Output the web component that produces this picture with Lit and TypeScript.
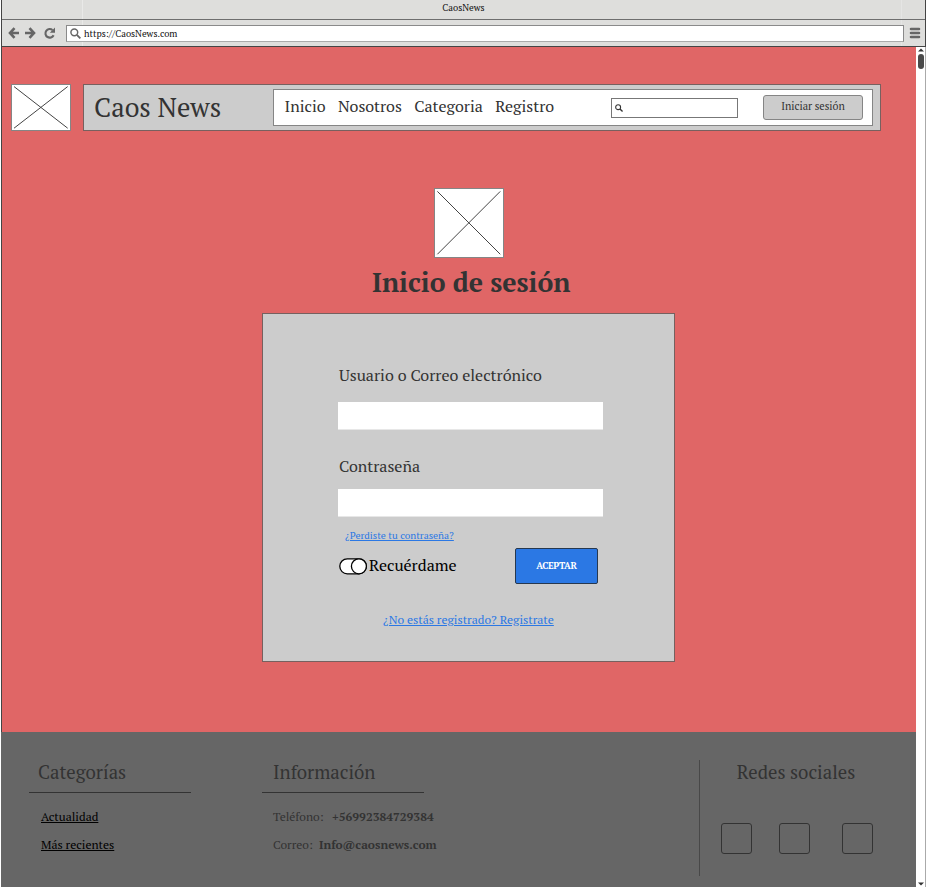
import { LitElement, html, css, svg } from "lit";
import { customElement } from "lit/decorators.js";

@customElement("image-placeholder")
class ImagePlaceholder extends LitElement {
  static styles = css`
    :host { display: block; box-sizing: border-box; background: #fff; border: 1px solid #858585; }
    .cross { display: block; width: 100%; height: 100%; }
  `;
  render() {
    return html`<svg class="cross" viewBox="0 0 100 100" preserveAspectRatio="none">
      <path d="M3.5 3.5L96 96M96 3.5L3.5 96" fill="none" stroke="#444" stroke-width="1" vector-effect="non-scaling-stroke"></path>
    </svg>`;
  }
}

@customElement("app-root")
class AppRoot extends LitElement {
  static styles = css`
    :host { display: block; width: 927px; height: 887px; overflow: hidden; background: #fff;
      font-family: "PT Serif", "Liberation Serif", serif; color: #333; }
    * { box-sizing: border-box; }
    svg { display: block; }
    a { color: inherit; text-decoration: underline; white-space: nowrap; }
    .window { width: 925px; height: 887px; margin-left: 1px; display: flex; flex-direction: column; }
    .chrome { height: 47px; border: solid #444; border-width: 0 1px 1px;
      background: linear-gradient(90deg, transparent 80px, #e9e9e8 80px, #e9e9e8 81px, transparent 81px,
        transparent 899px, #e5e5e4 899px, #e5e5e4 900px, transparent 900px), #dededc; }
    .title { height: 20px; border-bottom: 1px solid #6e6e6e; text-align: center; font-size: 9.33px; line-height: 15px; color: #111; }
    .toolbar { height: 26px; display: flex; align-items: center; padding: 0 5px 0 6px; }
    .icons { flex: none; margin-right: 10px; }
    .address { flex: none; width: 838px; height: 17px; margin-top: 1px; background: #fff; border: 1px solid #8a8a8a; border-bottom-color: #aaa;
      display: flex; align-items: center; padding-left: 3px; font-size: 9.33px; line-height: 15px; color: #111; }
    .address svg { margin-right: 3px; }
    .menu { flex: none; margin-left: 5px; }
    .viewport { flex: 1; display: flex; min-height: 0; }
    .page { width: 915px; background: #e06666; display: flex; flex-direction: column; }
    .main { height: 685px; border-left: 1px solid #444; display: flex; flex-direction: column; align-items: flex-start; }
    .header { display: flex; margin: 37px 0 0 9px; }
    .logo { width: 60px; height: 47px; }
    .bar { width: 798px; height: 47px; margin-left: 12px; padding: 4px 7px 4px 10px; background: #ccc;
      border: 1px solid #77605f; display: flex; justify-content: space-between; }
    .brand { font-size: 26.67px; line-height: 36px; }
    .panel { width: 600px; height: 37px; background: #fff; border: 1px solid #858585; display: flex; align-items: center; padding-left: 10.5px; }
    .nav { display: flex; gap: 12.3px; font-size: 16px; line-height: 32px; margin-top: -4px; width: 326.5px; white-space: nowrap; }
    .search { width: 127px; height: 20px; border: 1px solid #777; display: flex; align-items: center; padding-left: 3px; }
    .login { width: 100px; height: 25px; margin-left: 25px; border: 1px solid #858585; border-radius: 3px; background: #ccc;
      text-align: center; font-size: 10.67px; line-height: 20px; }
    .avatar { width: 70px; height: 70px; margin: 57px 0 0 432px; }
    .heading { margin: 5px 0 0 370px; font-size: 26.67px; line-height: 38px; font-weight: bold; white-space: nowrap; }
    .card { width: 413px; height: 349px; margin: 12px 0 0 260px; padding: 49px 70px 0 75px; background: #ccc; border: 1px solid #76605f; }
    .label { display: block; padding-left: 1px; font-size: 16px; line-height: 24px; white-space: nowrap; }
    .label.second { margin-top: 24px; }
    .field { width: 265px; height: 28px; margin-top: 15px; background: #fff; border-bottom: 1px solid #e7e7e7; }
    .field.second { margin-top: 11px; }
    .lost { display: block; margin: 12px 0 0 7px; font-size: 10px; line-height: 14px; color: #2b78e4; }
    .actions { display: flex; height: 36px; margin-top: 5px; }
    .remember { display: flex; width: 177px; padding-left: 1px; align-items: center; gap: 1px; color: #000; font-size: 16px; }
    .remember span { margin-top: -2px; }
    .accept { width: 83px; height: 36px; background: #2b78e4; border: 1px solid #26384f; border-radius: 2px; color: #fff;
      text-align: center; font-size: 9.33px; line-height: 34px; font-weight: bold; letter-spacing: -0.3px; }
    .register { display: block; margin: 28px 0 0 45px; font-size: 12px; line-height: 16px; color: #2b78e4; }
    .footer { flex: 1; background: #666; display: flex; }
    .group { padding-top: 28px; }
    .categories { margin-left: 28px; width: 162px; }
    .info { margin-left: 71px; width: 200px; }
    .head { font-size: 18.67px; line-height: 25px; padding: 0 0 0 10px; height: 33px; width: 162px; border-bottom: 1px solid #333; white-space: nowrap; }
    .categories .head { padding-left: 9px; }
    .info .head { padding-left: 11px; }
    .row { padding-left: 11px; height: 28px; line-height: 28px; font-size: 12px; white-space: nowrap; display: flex; }
    .rows { padding-top: 10px; }
    .categories .row { padding-left: 12px; color: #000; }
    .term { width: 59px; }
    .term.short { width: 46px; }
    .social { margin: 28px 0 11px 237px; border-left: 1px solid #484848; width: 190px; }
    .socialtitle { text-align: center; font-size: 18.67px; line-height: 25px; padding-left: 3px; }
    .squares { display: flex; gap: 27.4px; margin: 38px 0 0 21px; }
    .square { width: 31px; height: 31px; border: 1.5px solid #333; border-radius: 3px; }
    .square.last { margin-left: 4px; }
    .scroll { width: 10px; background: #fff; border-right: 1px solid #aaa; display: flex; flex-direction: column; align-items: center; }
    .thumb { width: 6px; height: 15px; border-radius: 3px; background: #4a4a4a; margin-top: 1px; }
    .down { margin-top: auto; margin-bottom: 1px; }
  `;

  private magnifier(size: number, color: string) {
    return html`<svg width=${size} height=${size} viewBox="0 0 12 12" fill="none" stroke=${color} stroke-width="1.6">
      ${svg`<circle cx="4.7" cy="4.7" r="3.7"></circle><path d="M7.5 7.5L11.3 11.3" stroke-width="2"></path>`}
    </svg>`;
  }

  render() {
    return html`
      <div class="window">
        <div class="chrome">
          <div class="title">CaosNews</div>
          <div class="toolbar">
            <svg class="icons" width="48" height="14" viewBox="0 0 48 14" fill="none" stroke="#666" stroke-width="2.6">
              <path d="M6.5 2.2L2 7L6.5 11.8M2 7H11"></path>
              <path d="M21.5 2.2L26 7L21.5 11.8M26 7H17"></path>
              <path d="M45.6 9.2A4.3 4.3 0 1 1 44.5 4" stroke-width="2.1"></path>
              <path d="M47 1.5V6.7H41.8Z" fill="#666" stroke="none"></path>
            </svg>
            <div class="address">${this.magnifier(11, "#666")}<span>https://CaosNews.com</span></div>
            <svg class="menu" width="12" height="12" viewBox="0 0 12 12" stroke="#666" stroke-width="2.6" stroke-linecap="round">
              <path d="M2 2H10M2 6H10M2 10H10"></path>
            </svg>
          </div>
        </div>
        <div class="viewport">
          <div class="page">
            <div class="main">
              <div class="header">
                <image-placeholder class="logo"></image-placeholder>
                <div class="bar">
                  <div class="brand">Caos News</div>
                  <div class="panel">
                    <div class="nav">
                      <span>Inicio</span><span>Nosotros</span><span>Categoria</span><span>Registro</span>
                    </div>
                    <div class="search">${this.magnifier(8, "#333")}</div>
                    <div class="login">Iniciar sesión</div>
                  </div>
                </div>
              </div>
              <image-placeholder class="avatar"></image-placeholder>
              <div class="heading">Inicio de sesión</div>
              <div class="card">
                <span class="label">Usuario o Correo electrónico</span>
                <div class="field"></div>
                <span class="label second">Contraseña</span>
                <div class="field second"></div>
                <a class="lost">¿Perdiste tu contraseña?</a>
                <div class="actions">
                  <div class="remember">
                    <svg width="29" height="17" viewBox="0.4 0.4 29 17" fill="#fff" stroke="#000" stroke-width="1.3">
                      <rect x="1.2" y="1.2" width="26.6" height="15" rx="7.5"></rect><circle cx="20.3" cy="8.7" r="7.5"></circle>
                    </svg>
                    <span>Recuérdame</span>
                  </div>
                  <div class="accept">ACEPTAR</div>
                </div>
                <a class="register">¿No estás registrado? Registrate</a>
              </div>
            </div>
            <div class="footer">
              <div class="group categories">
                <div class="head">Categorías</div>
                <div class="rows">
                  <div class="row"><a>Actualidad</a></div>
                  <div class="row"><a>Más recientes</a></div>
                </div>
              </div>
              <div class="group info">
                <div class="head">Información</div>
                <div class="rows">
                  <div class="row"><span class="term">Teléfono:</span><b>+56992384729384</b></div>
                  <div class="row"><span class="term short">Correo:</span><b>Info@caosnews.com</b></div>
                </div>
              </div>
              <div class="social">
                <div class="socialtitle">Redes sociales</div>
                <div class="squares"><div class="square"></div><div class="square"></div><div class="square last"></div></div>
              </div>
            </div>
          </div>
          <div class="scroll">
            <svg width="6" height="6" viewBox="0 0 6 6"><path d="M0 4.5L3 1.5L6 4.5Z" fill="#333"></path></svg>
            <div class="thumb"></div>
            <svg class="down" width="6" height="4" viewBox="0 0 6 4"><path d="M0 0.5L3 3.5L6 0.5Z" fill="#333"></path></svg>
          </div>
        </div>
      </div>`;
  }
}
